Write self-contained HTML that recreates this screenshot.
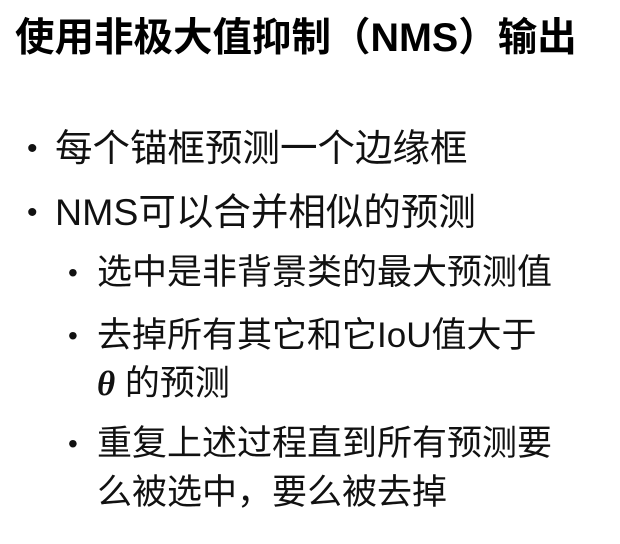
<!DOCTYPE html>
<html><head><meta charset="utf-8"><style>
html,body{margin:0;padding:0;background:#fff;width:620px;height:544px;overflow:hidden;position:relative}
div{position:absolute;white-space:nowrap;color:#111;font-family:"Liberation Sans","Noto Sans CJK SC",sans-serif;line-height:1}
.t{font-size:39.5px;font-weight:bold;left:15px;top:19px;color:#000}
.l1{font-size:37.5px;left:55px}
.l2{font-size:35px;left:97px}
.b1{font-size:30px;left:27px}
.b2{font-size:28px;left:68px}
.th{font-family:"Liberation Serif",serif;font-style:italic;font-weight:bold}
</style></head><body>
<div class="t">使用非极大值抑制（NMS）输出</div>
<div class="b1" style="top:134px">•</div><div class="l1" style="top:130px">每个锚框预测一个边缘框</div>
<div class="b1" style="top:198px">•</div><div class="l1" style="top:194px">NMS可以合并相似的预测</div>
<div class="b2" style="top:259px">•</div><div class="l2" style="top:255px">选中是非背景类的最大预测值</div>
<div class="b2" style="top:322px">•</div><div class="l2" style="top:318px">去掉所有其它和它IoU值大于</div>
<div class="l2" style="top:366px"><span class="th">θ</span> 的预测</div>
<div class="b2" style="top:430px">•</div><div class="l2" style="top:426px">重复上述过程直到所有预测要</div>
<div class="l2" style="top:475px">么被选中，要么被去掉</div>
</body></html>
